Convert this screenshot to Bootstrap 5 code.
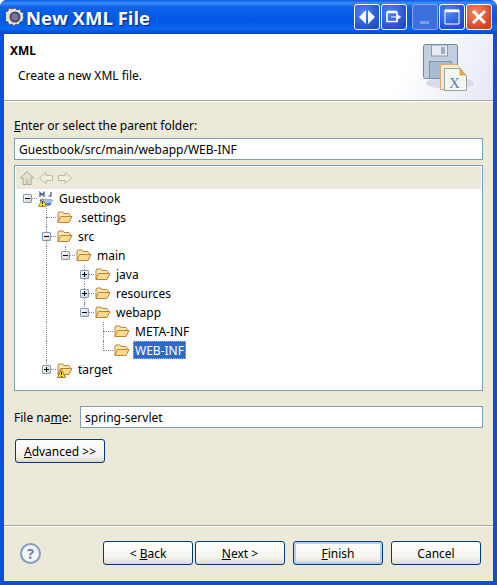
<!DOCTYPE html>
<html lang="en">
<head>
    <meta charset="UTF-8">
    <meta name="viewport" content="width=device-width, initial-scale=1.0">
    <title>New XML File</title>
    <link href="https://cdn.jsdelivr.net/npm/bootstrap@5.3.0/dist/css/bootstrap.min.css" rel="stylesheet">
    <style>
        html, body { height: 100%; }
        body {
            background: #fff;
            font-family: "Noto Sans", "DejaVu Sans", sans-serif;
            font-size: 12px;
            line-height: 19px;
            color: #000;
            overflow: hidden;
        }
        .win {
            width: 497px;
            height: 585px;
            border-radius: 7px 7px 0 0;
            background: #0a4fe0;
            overflow: hidden;
        }
        .titlebar {
            height: 34px;
            padding: 0 5px 0 6px;
            background: linear-gradient(#0a59e6 0, #3a8ffb 3px, #0f62ea 7px, #0058e4 20px, #0a66ee 29px, #0344cc 34px);
        }
        .titletext {
            font-family: "Open Sans", "Liberation Sans", sans-serif;
            font-weight: 700;
            font-size: 18.5px;
            color: #fff;
            text-shadow: 1px 1px 1px #0a1f7a;
            margin-left: 2px;
        }
        .capbtn {
            width: 26px;
            height: 26px;
            border: 1px solid #fff;
            border-radius: 3px;
            background: radial-gradient(circle at 35% 30%, #4f86f0, #1f4fd0 75%);
        }
        .capbtn.off { background: #3e6fdc; border-color: #84a8ee; }
        .capbtn.close { background: radial-gradient(circle at 35% 30%, #ec8a68, #d5421c 75%); }
        .capgap { margin-left: 5px; }
        .capnext { margin-left: 1px; }
        .inner {
            margin: 0 4px;
            height: 547px;
            background: #ece9d8;
        }
        .banner {
            height: 67px;
            background: linear-gradient(115deg, #fff 80%, #e4e8f6 100%);
            border-bottom: 1px solid #aca899;
            padding: 8px 0 0 6px;
            box-shadow: 0 1px 0 #fff;
        }
        .banner-title { font-weight: 700; line-height: 17px; margin-bottom: 8px; }
        .banner-sub { padding-left: 8px; line-height: 17px; }
        .banner-img { margin: 1px 17px 0 0; }
        .pane { padding: 16px 10px 0; }
        .parent-label { height: 21px; line-height: 18px; }
        .xp-input.form-control {
            height: 22px;
            padding: 1px 4px 0;
            border: 1px solid #7f9db9;
            border-radius: 0;
            font-size: 12px;
            line-height: 19px;
            color: #000;
            background: #fff;
        }
        .treebox {
            height: 226px;
            margin-top: 5px;
            border: 1px solid #7f9db9;
            background: #fff;
            padding: 1px;
        }
        .treetools {
            height: 22px;
            padding-left: 3px;
            gap: 3px;
            background: #ece9d8;
        }
        .treerow { height: 19px; padding-left: 2px; }
        .tc {
            position: relative;
            flex: 0 0 19px;
            width: 19px;
            height: 19px;
        }
        .tc svg { display: block; position: absolute; left: 1px; top: 2px; }
        .tc svg.warnmark { left: 1px; top: 9px; }
        .vline::before, .hline::after, .halfline::before {
            content: "";
            position: absolute;
            left: 9px;
        }
        .vline::before { top: 0; bottom: 0; border-left: 1px dotted #8a8a80; }
        .halfline::before { top: 0; height: 10px; border-left: 1px dotted #8a8a80; }
        .hline::after { top: 9px; left: 9px; width: 10px; border-top: 1px dotted #8a8a80; }
        .exp {
            position: absolute;
            z-index: 1;
            left: 5px;
            top: 5px;
            width: 9px;
            height: 9px;
            border: 1px solid #7f9db9;
            border-radius: 1px;
            background: linear-gradient(135deg, #fff, #d4d0c8);
        }
        .exp::before, .exp.plus::after {
            content: "";
            position: absolute;
            background: #000;
        }
        .exp::before { left: 1px; top: 3px; width: 5px; height: 1px; }
        .exp.plus::after { left: 3px; top: 1px; width: 1px; height: 5px; }
        .treelabel { padding-left: 3px; line-height: 20px; white-space: nowrap; }
        .treelabel.sel {
            margin-left: 1px;
            padding: 0 2px;
            height: 18px;
            background: #316ac5;
            color: #fff;
            line-height: 19px;
            outline: 1px dotted #e0c020;
            outline-offset: -1px;
        }
        .namerow { margin-top: 15px; height: 22px; line-height: 24px; }
        .namelabel { flex: 0 0 66px; }
        .xp-btn.btn {
            height: 24px;
            padding: 1px 0 0;
            font-size: 12px;
            line-height: 21px;
            color: #000;
            border: 1px solid #003c74;
            border-radius: 3px;
            background: linear-gradient(#fff, #f4f3ee 70%, #dcd8cc);
        }
        .xp-btn.def { box-shadow: inset 0 0 0 2px #b5cdf3, inset 0 -2px 0 #7f9ee8; }
        .advbtn.btn { width: 90px; margin: 11px 0 0 1px; }
        .sep { margin-top: 62px; border-top: 1px solid #aca899; border-bottom: 1px solid #fff; }
        .foot { padding: 14px 10px 0 5px; }
        .helpicon {
            width: 21px;
            height: 21px;
            margin: 0 62px 0 11px;
            border: 2px solid #8a9bbd;
            border-radius: 50%;
            background: #f4f5f8;
            color: #6d7f9f;
            font-weight: 700;
            font-size: 14px;
            line-height: 17px;
            text-align: center;
        }
        .wizbtn.btn { width: 90px; margin-right: 2px; }
        .wizbtn.wide { margin-left: 6px; margin-right: 8px; }
        .wizbtn.last { margin-right: 0; }
    </style>
</head>
<body>
    <svg width="0" height="0" class="d-none">
        <symbol id="folder" viewBox="0 0 16 14">
            <path d="M1 12.500V3l1-1h4l1 1.500h5l1 1V6" fill="#fbe6b0" stroke="#b9853a"/>
            <path d="M1 12.500 3.500 6.500h11.500l-3 6z" fill="#fdd98a" stroke="#b9853a"/>
        </symbol>
        <symbol id="warn" viewBox="0 0 9 9">
            <path d="M4.500.5 8.500 8.500H.5z" fill="#fcd93c" stroke="#a87a10"/>
            <path d="M4.500 3v3M4.500 7v1" stroke="#222"/>
        </symbol>
    </svg>

    <div class="win">
        <div class="titlebar d-flex align-items-center">
            <svg width="18" height="18" viewBox="0 0 18 18">
                <path d="M9 0l2 2 3-1 1 3 3 1-1 3 1 1-1 2 0 2-3 1-1 3-3-1-2 2-2-2-3 1-1-3-3-1 1-3-1-1 1-2-1-3 3-1 1-3 3 1z" fill="#e4e2da" stroke="#3a3a4a" stroke-width=".6"/>
                <circle cx="9" cy="9" r="5.500" fill="#4c4668"/>
                <circle cx="9" cy="9" r="3.500" fill="#7b7696"/>
            </svg>
            <div class="titletext flex-grow-1">New XML File</div>
            <div class="capbtn d-flex align-items-center justify-content-center">
                <svg width="18" height="16" viewBox="0 0 18 16"><path d="M8 1v14L1 8zM10 1v14l7-7z" fill="#fff"/></svg>
            </div>
            <div class="capbtn capnext d-flex align-items-center justify-content-center">
                <svg width="16" height="14" viewBox="0 0 16 14"><path d="M1 2.500h10v9H1zM1 1.500h10" fill="none" stroke="#fff" stroke-width="1.600"/><path d="M5 7h6M11 4.500 14.500 7 11 9.500z" fill="#fff" stroke="#fff"/></svg>
            </div>
            <div class="capbtn off capgap d-flex align-items-end justify-content-center pb-1">
                <svg width="10" height="4" viewBox="0 0 10 4"><rect width="9" height="3" fill="#7f9cea"/></svg>
            </div>
            <div class="capbtn capnext d-flex align-items-center justify-content-center">
                <svg width="16" height="16" viewBox="0 0 16 16"><path d="M1 1h14v14H1z" fill="none" stroke="#fff"/><path d="M1 2h14" stroke="#fff" stroke-width="2.500"/></svg>
            </div>
            <div class="capbtn close capnext d-flex align-items-center justify-content-center">
                <svg width="16" height="16" viewBox="0 0 16 16"><path d="M2 2l12 12M14 2 2 14" stroke="#fff" stroke-width="3"/></svg>
            </div>
        </div>

        <div class="inner">
            <div class="banner d-flex justify-content-between">
                <div>
                    <div class="banner-title">XML</div>
                    <div class="banner-sub">Create a new XML file.</div>
                </div>
                <svg class="banner-img" width="56" height="52" viewBox="0 0 56 52">
                    <ellipse cx="30" cy="40" rx="24" ry="6" fill="#d8dce8"/>
                    <rect x="3.500" y="1.500" width="34" height="34" rx="2" fill="#c3cfdf" stroke="#6f86a3"/>
                    <rect x="11.500" y="2" width="16" height="11" fill="#e6ebf2" stroke="#8a9db5"/>
                    <rect x="21" y="4" width="4" height="7" fill="#9fb0c6"/>
                    <rect x="9.500" y="18.500" width="22" height="17" fill="#a8bbd2" stroke="#7d92ad"/>
                    <path d="M20.500 21.500h16l6 6v19h-22z" fill="#f7ecd8" stroke="#dcae70"/>
                    <path d="M24.500 25.500h15l7 7v15h-22z" fill="#f4f6f4" stroke="#8fa79a"/>
                    <path d="M39.500 25.500l7 7h-7z" fill="#e8a848"/>
                    <text x="29" y="45" font-family="Liberation Serif, serif" font-size="15" fill="#5c82ad">X</text>
                </svg>
            </div>

            <div class="pane">
                <div class="parent-label"><u>E</u>nter or select the parent folder:</div>
                <input type="text" class="form-control xp-input" value="Guestbook/src/main/webapp/WEB-INF">

                <div class="treebox">
                    <div class="treetools d-flex align-items-center">
                        <svg width="16" height="16" viewBox="0 0 16 16"><path d="M8 1.500 1.500 8H4v6.500h8V8h2.500z" fill="#e4e1d2" stroke="#a8a698"/><rect x="6.500" y="9" width="3" height="5.500" fill="#c8c5b5"/></svg>
                        <svg width="16" height="16" viewBox="0 0 16 16"><path d="M1.500 8 8 2.500V5.500h6.500v5H8v3z" fill="#f0eee2" stroke="#bcbaad"/></svg>
                        <svg width="16" height="16" viewBox="0 0 16 16"><path d="M14.500 8 8 2.500V5.500H1.500v5H8v3z" fill="#f0eee2" stroke="#bcbaad"/></svg>
                    </div>

                    <div class="treerow d-flex">
                        <div class="tc hline"><span class="exp"></span></div>
                        <div class="tc">
                            <svg width="17" height="17" viewBox="0 0 17 17">
                                <path d="M2 9h12l-2 5H5z" fill="#5b8fd8" stroke="#2f5fa8"/>
                                <path d="M5 9h11l-3 3H5z" fill="#9cc2ee"/>
                                <path d="M4.500 7.500 8.500 15.500H.5z" fill="#fcd93c" stroke="#a87a10" stroke-width=".8"/>
                                <path d="M4.500 10v3M4.500 14v1" stroke="#222"/>
                                <path d="M2 6V1.500L4 4l2-2.500V6M13 1v4H10.500" fill="none" stroke="#28426e" stroke-width="1.100"/>
                            </svg>
                        </div>
                        <div class="treelabel">Guestbook</div>
                    </div>

                    <div class="treerow d-flex">
                        <div class="tc"></div>
                        <div class="tc vline hline"></div>
                        <div class="tc"><svg width="16" height="14"><use href="#folder"/></svg></div>
                        <div class="treelabel">.settings</div>
                    </div>

                    <div class="treerow d-flex">
                        <div class="tc"></div>
                        <div class="tc vline hline"><span class="exp"></span></div>
                        <div class="tc"><svg width="16" height="14"><use href="#folder"/></svg></div>
                        <div class="treelabel">src</div>
                    </div>

                    <div class="treerow d-flex">
                        <div class="tc"></div>
                        <div class="tc vline"></div>
                        <div class="tc halfline hline"><span class="exp"></span></div>
                        <div class="tc"><svg width="16" height="14"><use href="#folder"/></svg></div>
                        <div class="treelabel">main</div>
                    </div>

                    <div class="treerow d-flex">
                        <div class="tc"></div>
                        <div class="tc vline"></div>
                        <div class="tc"></div>
                        <div class="tc vline hline"><span class="exp plus"></span></div>
                        <div class="tc"><svg width="16" height="14"><use href="#folder"/></svg></div>
                        <div class="treelabel">java</div>
                    </div>

                    <div class="treerow d-flex">
                        <div class="tc"></div>
                        <div class="tc vline"></div>
                        <div class="tc"></div>
                        <div class="tc vline hline"><span class="exp plus"></span></div>
                        <div class="tc"><svg width="16" height="14"><use href="#folder"/></svg></div>
                        <div class="treelabel">resources</div>
                    </div>

                    <div class="treerow d-flex">
                        <div class="tc"></div>
                        <div class="tc vline"></div>
                        <div class="tc"></div>
                        <div class="tc halfline hline"><span class="exp"></span></div>
                        <div class="tc"><svg width="16" height="14"><use href="#folder"/></svg></div>
                        <div class="treelabel">webapp</div>
                    </div>

                    <div class="treerow d-flex">
                        <div class="tc"></div>
                        <div class="tc vline"></div>
                        <div class="tc"></div>
                        <div class="tc"></div>
                        <div class="tc vline hline"></div>
                        <div class="tc"><svg width="16" height="14"><use href="#folder"/></svg></div>
                        <div class="treelabel">META-INF</div>
                    </div>

                    <div class="treerow d-flex">
                        <div class="tc"></div>
                        <div class="tc vline"></div>
                        <div class="tc"></div>
                        <div class="tc"></div>
                        <div class="tc halfline hline"></div>
                        <div class="tc"><svg width="16" height="14"><use href="#folder"/></svg></div>
                        <div class="treelabel sel">WEB-INF</div>
                    </div>

                    <div class="treerow d-flex">
                        <div class="tc"></div>
                        <div class="tc halfline hline"><span class="exp plus"></span></div>
                        <div class="tc">
                            <svg width="16" height="14"><use href="#folder"/></svg>
                            <svg class="warnmark" width="9" height="9"><use href="#warn"/></svg>
                        </div>
                        <div class="treelabel">target</div>
                    </div>
                </div>

                <div class="namerow d-flex">
                    <div class="namelabel">File na<u>m</u>e:</div>
                    <input type="text" class="form-control xp-input" value="spring-servlet">
                </div>

                <button type="button" class="btn xp-btn advbtn d-block"><u>A</u>dvanced &gt;&gt;</button>
            </div>

            <div class="sep"></div>

            <div class="foot d-flex align-items-center">
                <div class="helpicon flex-shrink-0">?</div>
                <button type="button" class="btn xp-btn wizbtn">&lt; <u>B</u>ack</button>
                <button type="button" class="btn xp-btn wizbtn"><u>N</u>ext &gt;</button>
                <button type="button" class="btn xp-btn wizbtn def wide"><u>F</u>inish</button>
                <button type="button" class="btn xp-btn wizbtn last">Cancel</button>
            </div>
        </div>
    </div>

    <script src="https://cdn.jsdelivr.net/npm/bootstrap@5.3.0/dist/js/bootstrap.bundle.min.js"></script>
</body>
</html>
